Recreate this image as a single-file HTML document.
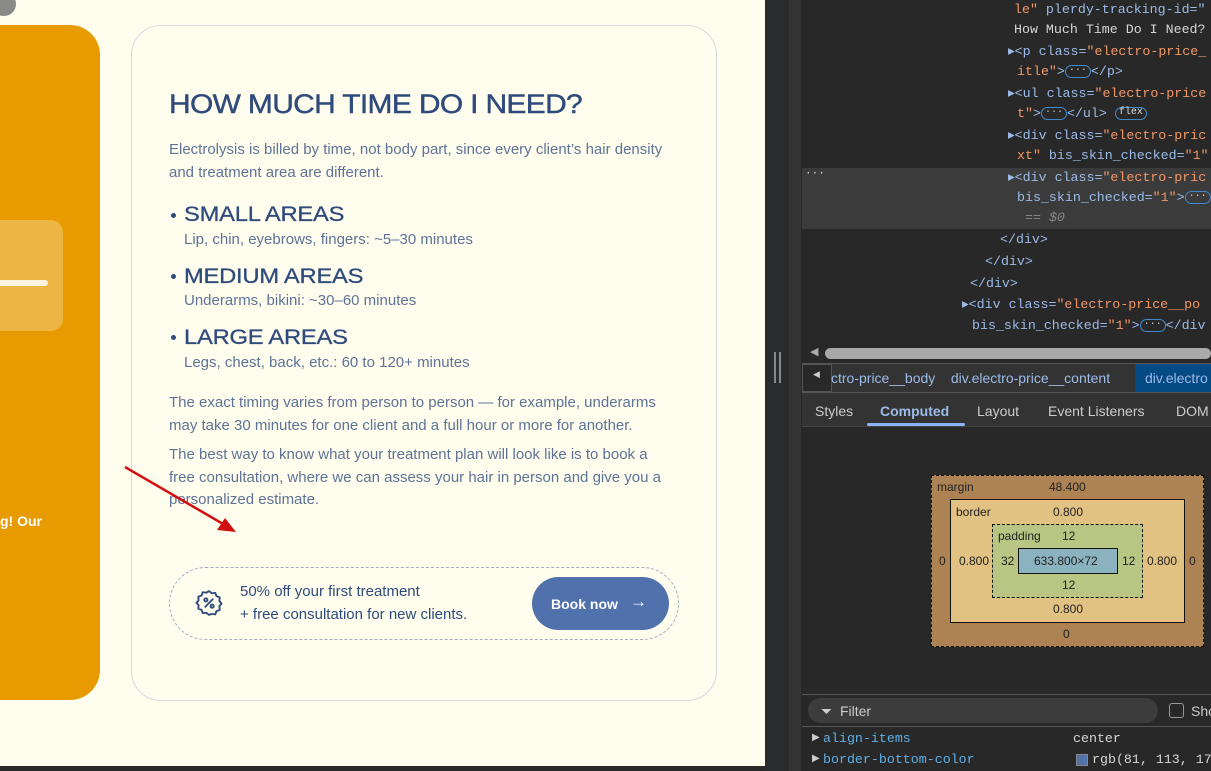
<!DOCTYPE html>
<html><head><meta charset="utf-8"><style>
*{margin:0;padding:0;box-sizing:border-box}
body{width:1211px;height:771px;overflow:hidden;background:#fffdee;position:relative;font-family:"Liberation Sans",sans-serif}
.a{position:absolute;white-space:nowrap}
.orange{position:absolute;left:-40px;top:25px;width:140px;height:675px;background:#e89b00;border-radius:30px}
.card{position:absolute;left:131px;top:25px;width:586px;height:676px;border:1px solid #d6dbe0;border-radius:30px}
h1{position:absolute;left:169px;top:89px;font-size:27px;font-weight:normal;color:#2f4b7c;letter-spacing:-0.6px;-webkit-text-stroke:0.4px #2f4b7c;white-space:nowrap;transform:scaleX(1.11);transform-origin:0 0}
.p{color:#5f7396;font-size:15px;line-height:22.5px;position:absolute;left:169px;white-space:nowrap}
.h3{color:#2f4b7c;font-size:21px;-webkit-text-stroke:0.3px #2f4b7c;letter-spacing:-0.2px;transform:scaleX(1.13);transform-origin:0 0}
.sub{color:#5f7396;font-size:15px}
.dot{position:absolute;width:5px;height:5px;border-radius:50%;background:#2f4b7c}
.promo{position:absolute;left:169px;top:567px;width:510px;height:73px;border:1px dashed #9fadc2;border-radius:37px}
.btn{position:absolute;left:532px;top:577px;width:137px;height:53px;border-radius:27px;background:#5171ad;color:#fff;font-size:14px;font-weight:bold}
.dev{position:absolute;left:765px;top:0;width:446px;height:771px;background:#282828;font-family:"Liberation Mono",monospace;font-size:13.3px;color:#9cbbe9}
.o{color:#f29766}.w{color:#d6d6d6}
.mono{position:absolute;white-space:nowrap}
.pill{display:inline-block;border:1px solid #3e8bd1;border-radius:8px;height:13px;line-height:10px;font-size:10px;padding:0 3px;color:#ccc;vertical-align:middle}
</style></head><body>
<div style="position:absolute;left:-8px;top:-8px;width:24px;height:24px;border-radius:50%;background:#8a8a86"></div>
<div class="orange"></div>
<div style="position:absolute;left:-20px;top:220px;width:83px;height:111px;background:#edb544;border-radius:12px"></div>
<div style="position:absolute;left:-5px;top:280px;width:53px;height:6px;background:#fbf3e0;border-radius:3px"></div>
<div class="a" style="left:0;top:513px;color:#fff;font-size:14px;font-weight:bold">g! Our</div>

<div class="card"></div>
<h1>HOW MUCH TIME DO I NEED?</h1>
<div class="p" style="top:139px">Electrolysis is billed by time, not body part, since every client’s hair density<br>and treatment area are different.</div>
<div class="dot" style="left:171px;top:213px"></div>
<div class="a h3" style="left:184px;top:203px">SMALL AREAS</div>
<div class="a sub" style="left:184px;top:231px">Lip, chin, eyebrows, fingers: ~5–30 minutes</div>
<div class="dot" style="left:171px;top:274px"></div>
<div class="a h3" style="left:184px;top:265px">MEDIUM AREAS</div>
<div class="a sub" style="left:184px;top:292px">Underarms, bikini: ~30–60 minutes</div>
<div class="dot" style="left:171px;top:335px"></div>
<div class="a h3" style="left:184px;top:326px">LARGE AREAS</div>
<div class="a sub" style="left:184px;top:354px">Legs, chest, back, etc.: 60 to 120+ minutes</div>
<div class="p" style="top:392px">The exact timing varies from person to person — for example, underarms<br>may take 30 minutes for one client and a full hour or more for another.</div>
<div class="p" style="top:444px">The best way to know what your treatment plan will look like is to book a<br>free consultation, where we can assess your hair in person and give you a<br>personalized estimate.</div>

<div class="promo"></div>
<svg class="a" style="left:194px;top:588px" width="30" height="30" viewBox="0 0 24 24" fill="none" stroke="#2f4b7c" stroke-width="1.5" stroke-linejoin="round" stroke-linecap="round"><path d="M12 2.5l2.2 1.7 2.8-.3 1 2.6 2.6 1-.3 2.8 1.7 2.2-1.7 2.2.3 2.8-2.6 1-1 2.6-2.8-.3L12 21.5l-2.2-1.7-2.8.3-1-2.6-2.6-1 .3-2.8L2 12l1.7-2.2-.3-2.8 2.6-1 1-2.6 2.8.3z"/><path d="M9 15l6-6"/><circle cx="9.5" cy="9.5" r="1.3"/><circle cx="14.5" cy="14.5" r="1.3"/></svg>
<div class="a" style="left:240px;top:583px;color:#2f4b7c;font-size:15px">50% off your first treatment</div>
<div class="a" style="left:240px;top:606px;color:#2f4b7c;font-size:15px">+ free consultation for new clients.</div>
<div class="btn"><span class="a" style="left:19px;top:19px">Book now</span><span class="a" style="left:98px;top:15px;font-weight:normal;font-size:17px">→</span></div>

<svg class="a" style="left:120px;top:462px" width="125" height="80"><line x1="5" y1="5" x2="110" y2="66" stroke="#d01010" stroke-width="2.5"/><path d="M116 70 L97 68 L105 56 Z" fill="#d01010"/></svg>

<div style="position:absolute;left:0;top:766px;width:765px;height:5px;background:#2a2a2a"></div>

<div class="dev">
<div style="position:absolute;left:0;top:0;width:24px;height:771px;background:#2a2b2d"></div>
<div style="position:absolute;left:9px;top:352px;width:2px;height:31px;background:#888"></div>
<div style="position:absolute;left:14px;top:352px;width:2px;height:31px;background:#888"></div>
<div style="position:absolute;left:24px;top:0;width:12px;height:771px;background:#343434"></div>
<div style="position:absolute;left:37px;top:168px;width:409px;height:61px;background:#3b3b3b"></div>
<div class="mono" style="left:249px;top:2px"><span class="o">le"</span> plerdy-tracking-id="</div>
<div class="mono w" style="left:249px;top:22px">How Much Time Do I Need?</div>
<div class="mono" style="left:243px;top:44px">▸&lt;p class=<span class="o">"electro-price_</span></div>
<div class="mono" style="left:252px;top:64px"><span class="o">itle"</span>&gt;<span class="pill">···</span>&lt;/p&gt;</div>
<div class="mono" style="left:243px;top:86px">▸&lt;ul class=<span class="o">"electro-price</span></div>
<div class="mono" style="left:252px;top:106px"><span class="o">t"</span>&gt;<span class="pill">···</span>&lt;/ul&gt; <span class="pill" style="color:#ddd">flex</span></div>
<div class="mono" style="left:243px;top:128px">▸&lt;div class=<span class="o">"electro-pric</span></div>
<div class="mono" style="left:252px;top:148px"><span class="o">xt"</span> bis_skin_checked=<span class="o">"1"</span></div>
<div class="mono w" style="left:40px;top:168px;font-size:11px">···</div>
<div class="mono" style="left:243px;top:170px">▸&lt;div class=<span class="o">"electro-pric</span></div>
<div class="mono" style="left:252px;top:190px">bis_skin_checked=<span class="o">"1"</span>&gt;<span class="pill">···</span></div>
<div class="mono" style="left:260px;top:210px;color:#888;font-style:italic">== $0</div>
<div class="mono" style="left:235px;top:232px">&lt;/div&gt;</div>
<div class="mono" style="left:220px;top:254px">&lt;/div&gt;</div>
<div class="mono" style="left:205px;top:276px">&lt;/div&gt;</div>
<div class="mono" style="left:197px;top:297px">▸&lt;div class=<span class="o">"electro-price__po</span></div>
<div class="mono" style="left:207px;top:318px">bis_skin_checked=<span class="o">"1"</span>&gt;<span class="pill">···</span>&lt;/div</div>
<div style="position:absolute;left:37px;top:343px;width:409px;height:20px;background:#282828"></div>
<div class="mono" style="left:45px;top:345px;color:#aaa;font-size:11px">◀</div>
<div style="position:absolute;left:60px;top:348px;width:386px;height:11px;background:#a9a9a9;border-radius:6px"></div>
<div style="position:absolute;left:37px;top:363px;width:409px;height:30px;background:#333;border-top:1px solid #555;border-bottom:1px solid #555"></div>
<div style="position:absolute;left:37px;top:364px;width:30px;height:28px;background:#282828;border:1px solid #555"></div>
<div class="mono" style="left:48px;top:370px;color:#ccc;font-size:9px">◀</div>
<div class="mono" style="left:66px;top:370px;font-family:'Liberation Sans';font-size:14px">ctro-price__body &nbsp;&nbsp; div.electro-price__content</div>
<div style="position:absolute;left:370px;top:364px;width:76px;height:28px;background:#044a85"></div>
<div class="mono" style="left:380px;top:370px;font-family:'Liberation Sans';font-size:14px">div.electro</div>
<div style="position:absolute;left:37px;top:393px;width:409px;height:34px;background:#333;border-bottom:1px solid #444"></div>
<div class="mono" style="left:50px;top:403px;font-family:'Liberation Sans';font-size:14px;color:#ccc">Styles</div>
<div class="mono" style="left:115px;top:403px;font-family:'Liberation Sans';font-size:14px;color:#9cbbe9;font-weight:bold">Computed</div>
<div style="position:absolute;left:102px;top:423px;width:98px;height:3px;background:#8ab4f8;border-radius:2px"></div>
<div class="mono" style="left:212px;top:403px;font-family:'Liberation Sans';font-size:14px;color:#ccc">Layout</div>
<div class="mono" style="left:283px;top:403px;font-family:'Liberation Sans';font-size:14px;color:#ccc">Event Listeners</div>
<div class="mono" style="left:411px;top:403px;font-family:'Liberation Sans';font-size:14px;color:#ccc">DOM</div>
<div style="position:absolute;left:166px;top:475px;width:273px;height:172px;background:#ad8354;border:1px dashed #111"></div>
<div style="position:absolute;left:185px;top:499px;width:235px;height:124px;background:#e2c282;border:1px solid #111"></div>
<div style="position:absolute;left:227px;top:524px;width:151px;height:74px;background:#b9c583;border:1px dashed #111"></div>
<div style="position:absolute;left:253px;top:548px;width:100px;height:26px;background:#8ab3bf;border:1px solid #111"></div>
<div style="font-family:'Liberation Sans';font-size:12px;color:#222">
<div class="mono" style="left:172px;top:480px">margin</div><div class="mono" style="left:284px;top:480px">48.400</div>
<div class="mono" style="left:191px;top:505px">border</div><div class="mono" style="left:288px;top:505px">0.800</div>
<div class="mono" style="left:233px;top:529px">padding</div><div class="mono" style="left:297px;top:529px">12</div>
<div class="mono" style="left:174px;top:554px">0</div><div class="mono" style="left:194px;top:554px">0.800</div><div class="mono" style="left:236px;top:554px">32</div>
<div class="mono" style="left:269px;top:554px">633.800×72</div>
<div class="mono" style="left:357px;top:554px">12</div><div class="mono" style="left:382px;top:554px">0.800</div><div class="mono" style="left:424px;top:554px">0</div>
<div class="mono" style="left:297px;top:578px">12</div>
<div class="mono" style="left:288px;top:602px">0.800</div>
<div class="mono" style="left:298px;top:627px">0</div>
</div>
<div style="position:absolute;left:37px;top:694px;width:409px;height:1px;background:#555"></div>
<div style="position:absolute;left:43px;top:698px;width:350px;height:25px;background:#3c3c3c;border-radius:13px"></div>
<div class="mono" style="left:56px;top:703px;font-family:'Liberation Sans';font-size:14px;color:#ccc">⏷ &nbsp;Filter</div>
<div style="position:absolute;left:404px;top:703px;width:15px;height:15px;border:1.5px solid #999;border-radius:3px"></div>
<div class="mono" style="left:426px;top:703px;font-family:'Liberation Sans';font-size:14px;color:#ccc">Sho</div>
<div style="position:absolute;left:37px;top:726px;width:409px;height:1px;background:#555"></div>
<div class="mono" style="left:47px;top:732px;color:#ccc;font-size:10px">▶</div>
<div class="mono" style="left:58px;top:731px;color:#5db0e6">align-items</div>
<div class="mono w" style="left:308px;top:731px">center</div>
<div class="mono" style="left:47px;top:753px;color:#ccc;font-size:10px">▶</div>
<div class="mono" style="left:58px;top:752px;color:#5db0e6">border-bottom-color</div>
<div style="position:absolute;left:311px;top:754px;width:12px;height:12px;background:#5171ad;border:1px solid #888"></div>
<div class="mono w" style="left:327px;top:752px">rgb(81, 113, 17</div>
</div>
</body></html>
